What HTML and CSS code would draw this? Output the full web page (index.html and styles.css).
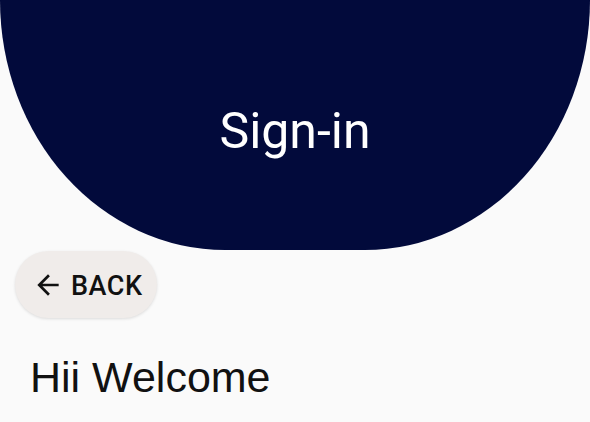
FILE: index.html
```html
<!DOCTYPE html>
<html>
<head>
<meta charset="utf-8">
<link rel="stylesheet" href="styles.css">
</head>
<body>
<div class="page">
  <header class="hero">
    <h1 class="hero-title">Sign-in</h1>
  </header>
  <button class="back-btn">
    <svg class="back-icon" viewBox="0 0 24 24" width="32" height="32"><path d="M20 11H7.83l5.59-5.59L12 4l-8 8 8 8 1.41-1.41L7.83 13H20v-2z" fill="#111"/></svg>
    <span class="back-label">BACK</span>
  </button>
  <h2 class="welcome">Hii Welcome</h2>
</div>
</body>
</html>
```
FILE: styles.css
```css
html, body {
  margin: 0;
  padding: 0;
  background: #fafafa;
}
.page {
  width: 590px;
  height: 422px;
  overflow: hidden;
  font-family: Roboto, "Liberation Sans", sans-serif;
}
.hero {
  height: 250px;
  background: #020a3b;
  border-radius: 0 0 225px 225px / 0 0 250px 250px;
  display: flex;
  align-items: center;
  justify-content: center;
}
.hero-title {
  margin: 0;
  color: #fff;
  font-weight: 400;
  font-size: 50px;
  padding-top: 12px;
}
.back-btn {
  margin: 1px 0 0 15px;
  height: 67px;
  width: 142px;
  border: none;
  border-radius: 34px;
  background: #f0ecea;
  box-shadow: 0 1px 3px rgba(0,0,0,0.12);
  display: flex;
  align-items: center;
  padding: 0 0 0 17px;
  gap: 7px;
  font-family: inherit;
  cursor: pointer;
}
.back-icon {
  flex: none;
}
.back-label {
  font-size: 27px;
  font-weight: 500;
  color: #111;
  letter-spacing: 0.5px;
  padding-top: 3px;
}
.welcome {
  margin: 35px 0 0 30px;
  font-family: "Liberation Sans", Arial, sans-serif;
  font-weight: 400;
  font-size: 43px;
  color: #111;
}
```
